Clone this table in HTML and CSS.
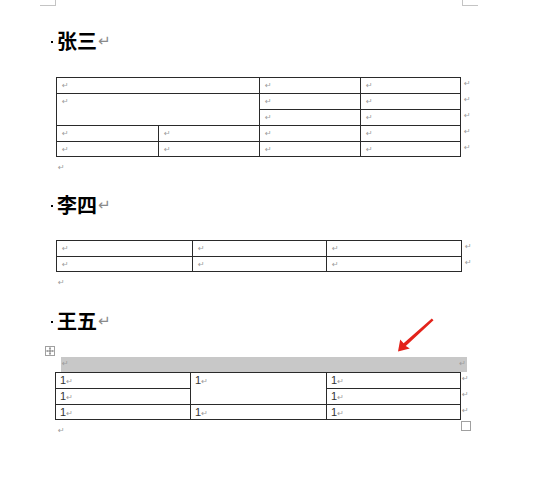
FILE: index.html
```html
<!DOCTYPE html>
<html lang="zh">
<head>
<meta charset="utf-8">
<link rel="stylesheet" href="styles.css">
</head>
<body>
<div class="crop"><span class="crop-l"></span><span class="crop-r"></span></div>
<div class="page">
  <h2 class="hd hd1"><span class="keep"></span>张三<span class="pm">↵</span></h2>
  <div class="tw tw1">
    <div class="grid g1">
      <div class="c s2"><span class="m">↵</span></div>
      <div class="c"><span class="m">↵</span></div>
      <div class="c"><span class="m">↵</span></div>
      <div class="c s2 r2"><span class="m">↵</span></div>
      <div class="c"><span class="m">↵</span></div>
      <div class="c"><span class="m">↵</span></div>
      <div class="c"><span class="m">↵</span></div>
      <div class="c"><span class="m">↵</span></div>
      <div class="c"><span class="m">↵</span></div>
      <div class="c"><span class="m">↵</span></div>
      <div class="c"><span class="m">↵</span></div>
      <div class="c"><span class="m">↵</span></div>
      <div class="c"><span class="m">↵</span></div>
      <div class="c"><span class="m">↵</span></div>
      <div class="c"><span class="m">↵</span></div>
      <div class="c"><span class="m">↵</span></div>
    </div>
    <div class="rm rm1"><span class="m">↵</span><span class="m">↵</span><span class="m">↵</span><span class="m">↵</span><span class="m">↵</span></div>
  </div>
  <div class="after"><span class="m">↵</span></div>

  <h2 class="hd hd2"><span class="keep"></span>李四<span class="pm">↵</span></h2>
  <div class="tw tw2">
    <div class="grid g2">
      <div class="c"><span class="m">↵</span></div>
      <div class="c"><span class="m">↵</span></div>
      <div class="c"><span class="m">↵</span></div>
      <div class="c"><span class="m">↵</span></div>
      <div class="c"><span class="m">↵</span></div>
      <div class="c"><span class="m">↵</span></div>
    </div>
    <div class="rm rm2"><span class="m">↵</span><span class="m">↵</span></div>
  </div>
  <div class="after"><span class="m">↵</span></div>

  <h2 class="hd hd3"><span class="keep"></span>王五<span class="pm">↵</span></h2>
  <div class="tw3">
    <span class="move">
      <svg width="8" height="8" viewBox="0 0 8 8"><path d="M4 1.2V6.8M1.2 4H6.8" stroke="#666" stroke-width="0.8" fill="none"/><path d="M4 0 L2.9 1.5 H5.1Z M4 8 L2.9 6.5 H5.1Z M0 4 L1.5 2.9 V5.1Z M8 4 L6.5 2.9 V5.1Z" fill="#666"/></svg>
    </span>
    <div class="shade"><span class="m">↵</span><span class="m">↵</span></div>
    <div class="tw">
      <div class="grid g3">
        <div class="c c3">1<span class="m">↵</span></div>
        <div class="c c3 r2">1<span class="m">↵</span></div>
        <div class="c c3">1<span class="m">↵</span></div>
        <div class="c c3">1<span class="m">↵</span></div>
        <div class="c c3">1<span class="m">↵</span></div>
        <div class="c c3">1<span class="m">↵</span></div>
        <div class="c c3">1<span class="m">↵</span></div>
        <div class="c c3">1<span class="m">↵</span></div>
      </div>
      <div class="rm rm3"><span class="m">↵</span><span class="m">↵</span><span class="m">↵</span></div>
    </div>
    <span class="resize"></span>
  </div>
  <div class="after"><span class="m">↵</span></div>
</div>
<svg class="arrow" width="50" height="45" viewBox="390 312 50 45">
  <polygon points="433.5,320.2 405.8,346 409.8,348.6 398,351.5 400.2,339.6 403.6,343.2 431.8,318.6" fill="#e3231b"/>
</svg>
</body>
</html>
```

FILE: styles.css
```css
* { box-sizing: border-box; }
body {
  margin: 0;
  background: #fff;
  font-family: "Noto Sans CJK SC", "Noto Sans", sans-serif;
  color: #000;
  position: relative;
}
.crop { display: flex; height: 6px; padding-left: 40px; }
.crop-l { width: 16px; height: 6px; border-right: 1px solid #c4c4c4; border-bottom: 1px solid #c4c4c4; }
.crop-r { width: 16px; height: 6px; margin-left: 406px; border-left: 1px solid #c4c4c4; border-bottom: 1px solid #c4c4c4; }

.page { padding-left: 56px; }

.hd {
  display: flex;
  align-items: center;
  height: 24px;
  margin: 0 0 0 -5px;
  font-size: 20px;
  line-height: 24px;
  font-weight: 700;
}
.keep { width: 2px; height: 2px; background: #000; margin: 2px 4px 0 0; }
.pm {
  font-family: "DejaVu Sans", sans-serif;
  font-size: 15px;
  font-weight: 400;
  color: #8a8a8a;
  margin-left: 1px;
}
.hd1 { margin-top: 23px; }
.hd2 { margin-top: 24px; }
.hd3 { margin-top: 25px; }

.tw { display: flex; align-items: flex-start; }
.tw1 { margin-top: 24px; }
.tw2 { margin-top: 23px; }

.grid { display: grid; border-top: 1px solid #2a2a2a; border-left: 1px solid #2a2a2a; }
.c {
  border-right: 1px solid #2a2a2a;
  border-bottom: 1px solid #2a2a2a;
  padding: 1px 0 0 5px;
  font-size: 8px;
  line-height: 12px;
}
.m { font-family: "DejaVu Sans", sans-serif; font-size: 8px; color: #9c9c9c; }
.s2 { grid-column: span 2; }
.r2 { grid-row: span 2; }

.g1 { grid-template-columns: 102px 101px 101px 100px; grid-template-rows: 16px 16px 16px 16px 15px; }
.g2 { grid-template-columns: 136px 134px 135px; grid-template-rows: 16px 15px; }
.g3 { grid-template-columns: 135px 136px 134px; grid-template-rows: 16px 16px 15px; }

.rm { display: grid; padding-top: 1px; margin-left: 3px; line-height: 12px; }
.rm1 { grid-template-rows: 16px 16px 16px 16px 15px; }
.rm2 { grid-template-rows: 16px 15px; }
.rm3 { grid-template-rows: 16px 16px 15px; margin-left: 1px; }

.after { height: 12px; padding-left: 2px; line-height: 12px; }

.tw3 { position: relative; margin-top: 24px; margin-left: -1px; }
.shade {
  margin-left: 6px;
  width: 406px;
  height: 15px;
  background: #c8c8c8;
  display: flex;
  justify-content: space-between;
  align-items: flex-start;
  padding: 1px 1px 0 1px;
  line-height: 12px;
}
.c3 {
  padding: 0 0 0 4px;
  font-family: "Liberation Sans", sans-serif;
  font-size: 11px;
  line-height: 15px;
  color: #333;
}
.move {
  position: absolute;
  left: -10px;
  top: -11px;
  width: 10px;
  height: 10px;
  border: 1px solid #a0a0a0;
  background: #fff;
  display: flex;
}
.move svg { display: block; }
.resize {
  position: absolute;
  left: 406px;
  top: 64px;
  width: 10px;
  height: 10px;
  border: 1px solid #a0a0a0;
  background: #fff;
}
.arrow { position: absolute; left: 390px; top: 312px; }
```
